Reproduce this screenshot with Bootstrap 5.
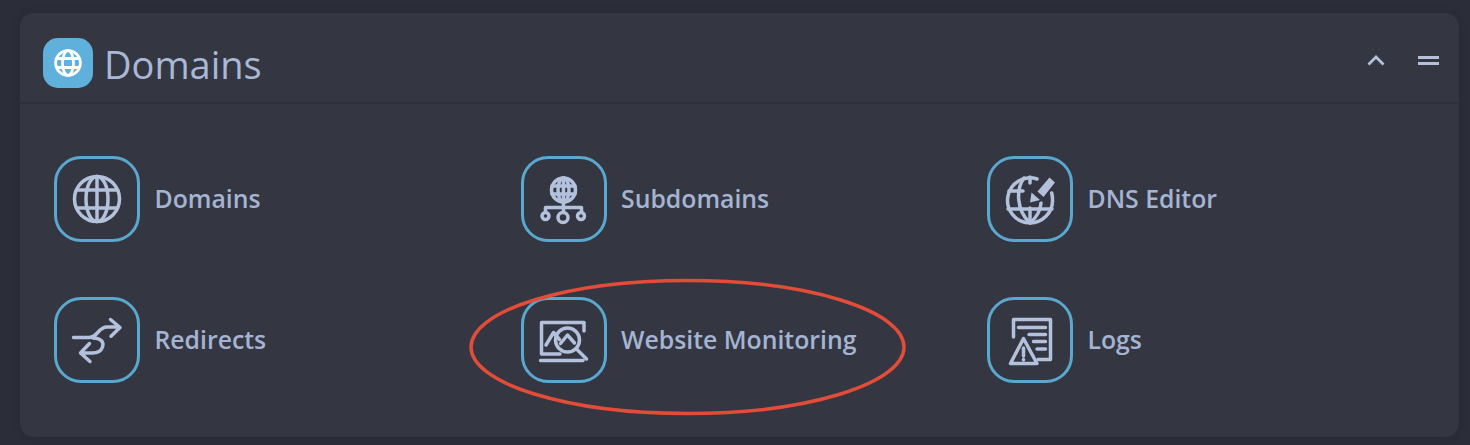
<!DOCTYPE html>
<html lang="en">
<head>
<meta charset="utf-8">
<title>Domains</title>
<link href="https://cdn.jsdelivr.net/npm/bootstrap@5.3.0/dist/css/bootstrap.min.css" rel="stylesheet">
<style>
html,body{height:445px;overflow:hidden}
body{background:#2b2e38;font-family:"Open Sans",sans-serif;color:#a9b8d6;margin:0}
.stage{padding:13px 11px 8px 20px;position:relative;height:445px}
.panel{background:#343742;border:0;border-radius:14px;height:424px;box-shadow:0 0 10px rgba(0,0,0,.12);color:inherit}
.panel-head{background:transparent;border:0;border-bottom:2px solid #2c2f39;border-radius:14px 14px 0 0!important;height:91px;padding:25px 20px 0 23px}
.head-badge{width:50px;height:50px;background:#5fb0da;border-radius:15px;flex:none}
.head-title{font-size:38px;line-height:52px;font-weight:400;margin:0 0 0 11px;color:#a9b8d6}
.tool{background:none;border:0;padding:0;display:block;line-height:0}
.tool+.tool{margin-left:33px}
.panel-body{padding:52px 5.5px 0 34px}
.tile{height:86px}
.tile-gap{margin-top:55px}
.tile-box{width:86px;height:86px;border:3px solid #5aa8cf;border-radius:27px;flex:none;background:transparent}
.tile-box svg{display:block;width:80px;height:80px}
.tile-label{font-size:24.800px;font-weight:600;margin-left:14.500px;color:#a5b4d2;text-decoration:none;line-height:1;position:relative;top:-1px}
.ic{fill:none;stroke:#b3c1dc;stroke-width:3.500;stroke-linecap:round;stroke-linejoin:round}
.ic-fill{fill:#b3c1dc;stroke:#343742;stroke-width:2.500;paint-order:stroke}
.oval{position:absolute;left:468px;top:278px;width:440px;height:138px;pointer-events:none}
</style>
</head>
<body>
<div class="stage">
  <div class="card panel">
    <div class="card-header panel-head d-flex align-items-start">
      <div class="head-badge d-flex align-items-center justify-content-center">
        <svg width="30" height="30" viewBox="0 0 30 30" fill="none" stroke="#fff" stroke-width="2.8"><circle cx="15" cy="15" r="12.4"/><ellipse cx="15" cy="15" rx="5.5" ry="12.4"/><path d="M3.5 10.5h23M3.5 19.5h23"/></svg>
      </div>
      <h2 class="head-title">Domains</h2>
      <div class="ms-auto d-flex align-items-center" style="height:44px">
        <button class="tool" type="button" aria-label="Collapse"><svg width="18" height="12" viewBox="0 0 18 12" fill="none" stroke="#b3c1dc" stroke-width="2.8"><path d="M1.5 10.500 9 3l7.500 7.500"/></svg></button>
        <button class="tool" type="button" aria-label="Menu"><svg width="21" height="9" viewBox="0 0 21 9" fill="#b3c1dc"><rect y="0" width="21" height="3"/><rect y="6" width="21" height="3"/></svg></button>
      </div>
    </div>
    <div class="card-body panel-body">
      <div class="row g-0">
        <div class="col-4">
          <div class="tile d-flex align-items-center">
            <div class="tile-box"><svg viewBox="3 3 80 80"><g class="ic"><circle cx="43" cy="43" r="22.500"/><ellipse cx="43" cy="43" rx="11" ry="22.500"/><path d="M43 20.500v45M23 34h40M23 52h40"/></g></svg></div>
            <a class="tile-label" href="#">Domains</a>
          </div>
        </div>
        <div class="col-4">
          <div class="tile d-flex align-items-center">
            <div class="tile-box"><svg viewBox="3 3 80 80"><g class="ic"><circle cx="42.500" cy="34" r="12"/><ellipse cx="42.500" cy="34" rx="5.500" ry="12"/><path d="M42.500 22v24M31 30h23M31 38h23M42.500 46v10M24.500 56v-4.500h36V56"/><circle cx="24.500" cy="60" r="3.500"/><circle cx="42" cy="61.500" r="5"/><circle cx="60" cy="60" r="3.500"/></g></svg></div>
            <a class="tile-label" href="#">Subdomains</a>
          </div>
        </div>
        <div class="col-4">
          <div class="tile d-flex align-items-center">
            <div class="tile-box"><svg viewBox="3 3 80 80"><g class="ic"><path d="M50 23A22.500 22.500 0 1 0 65.500 43c0-2-.3-4-.8-6"/><path d="M37 22c-8 11-8 32 6 45 7-6 10.500-13 11-20"/><path d="M22 35h14M21 53h44"/><path d="M43 21v6M43 52v15"/></g><path class="ic-fill" d="M43 46.500l1.500-10 8.500 7.500z"/><path class="ic-fill" d="M50.500 35.500 62.500 21.500l5.500 5-11.500 14.500z"/></svg></div>
            <a class="tile-label" href="#">DNS Editor</a>
          </div>
        </div>
      </div>
      <div class="row g-0 tile-gap">
        <div class="col-4">
          <div class="tile d-flex align-items-center">
            <div class="tile-box"><svg viewBox="3 3 80 80"><g class="ic"><path d="M19.500 40.500H35c9 0 9-10.500 18-10.500h12.500M56.500 22.500l9.500 8-9 8.700"/><path d="M39 41c9 .5 11 4.500 9.500 9-1.500 4.500-5 6-10 6H27M35.500 46.500l-9 9.500 9.500 8.500"/></g></svg></div>
            <a class="tile-label" href="#">Redirects</a>
          </div>
        </div>
        <div class="col-4">
          <div class="tile d-flex align-items-center">
            <div class="tile-box"><svg viewBox="3 3 80 80"><g class="ic"><path d="M63 34v-8.500H20.500V57H39"/><path d="M25 48l7.500-12.500 6 7"/><circle cx="46.500" cy="43" r="12"/><path d="M39.500 46.500l7-8.500 7 8M55.500 52l10 10M19.500 63.500H62"/></g></svg></div>
            <a class="tile-label" href="#">Website Monitoring</a>
          </div>
        </div>
        <div class="col-4">
          <div class="tile d-flex align-items-center">
            <div class="tile-box"><svg viewBox="3 3 80 80"><g class="ic"><path d="M26.500 40V22.500h37V62.500H51"/><path d="M31.500 30.500h27M42 37.500h16.500M46.500 44.500h12M50 52h8.500"/><path d="M36.500 41.500 23.500 66.500h26.500z"/><path d="M36.500 51v8M36.500 62.500v.5"/></g></svg></div>
            <a class="tile-label" href="#">Logs</a>
          </div>
        </div>
      </div>
    </div>
  </div>
  <svg class="oval" viewBox="0 0 440 138" aria-hidden="true"><ellipse cx="219.500" cy="69" rx="216.500" ry="66.500" fill="none" stroke="#e24c38" stroke-width="3.500"/></svg>
</div>
<script src="https://cdn.jsdelivr.net/npm/bootstrap@5.3.0/dist/js/bootstrap.bundle.min.js"></script>
</body>
</html>
